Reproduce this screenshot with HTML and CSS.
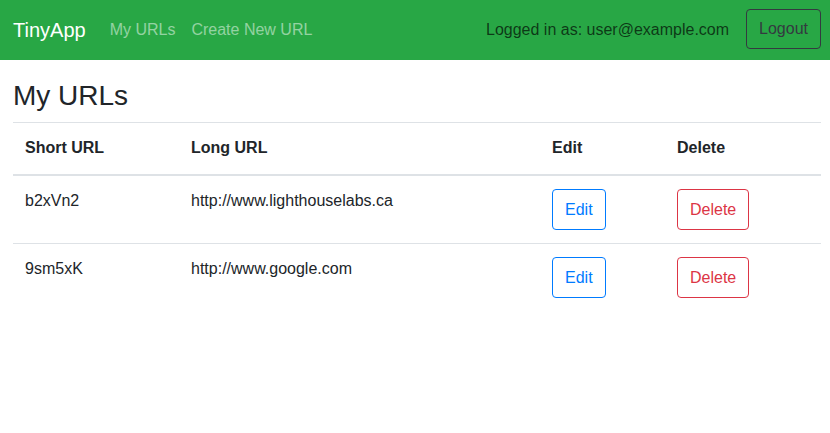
FILE: index.html
```html
<!DOCTYPE html>
<html lang="en">
<head>
<meta charset="utf-8">
<title>TinyApp</title>
<link rel="stylesheet" href="styles.css">
</head>
<body>
<nav class="navbar">
  <a class="brand" href="#">TinyApp</a>
  <div class="nav-links">
    <a class="nav-link" href="#">My URLs</a>
    <a class="nav-link" href="#">Create New URL</a>
  </div>
  <div class="nav-right">
    <span class="nav-text">Logged in as: user@example.com</span>
    <button class="btn btn-dark-outline logout" type="button">Logout</button>
  </div>
</nav>
<main class="main">
  <h3 class="title">My URLs</h3>
  <table class="table">
    <thead>
      <tr>
        <th class="col-short">Short URL</th>
        <th class="col-long">Long URL</th>
        <th class="col-edit">Edit</th>
        <th class="col-delete">Delete</th>
      </tr>
    </thead>
    <tbody>
      <tr>
        <td>b2xVn2</td>
        <td>http://www.lighthouselabs.ca</td>
        <td><button class="btn btn-blue" type="button">Edit</button></td>
        <td><button class="btn btn-red" type="button">Delete</button></td>
      </tr>
      <tr>
        <td>9sm5xK</td>
        <td>http://www.google.com</td>
        <td><button class="btn btn-blue" type="button">Edit</button></td>
        <td><button class="btn btn-red" type="button">Delete</button></td>
      </tr>
    </tbody>
  </table>
</main>
</body>
</html>
```

FILE: styles.css
```css
* { box-sizing: border-box; }

html, body {
  margin: 0;
  padding: 0;
  background: #ffffff;
  color: #212529;
  font-family: "Liberation Sans", Arial, sans-serif;
  font-size: 16px;
  line-height: 1.5;
}

.navbar {
  display: flex;
  align-items: center;
  height: 60px;
  padding: 0 9px 0 13px;
  background: #28a745;
}

.brand {
  font-size: 20px;
  line-height: 30px;
  color: #ffffff;
  text-decoration: none;
  margin-right: 16px;
}

.nav-links {
  display: flex;
}

.nav-link {
  color: rgba(255, 255, 255, 0.5);
  text-decoration: none;
  padding: 0 8px;
  line-height: 24px;
}

.nav-right {
  margin-left: auto;
  display: flex;
  align-items: center;
  gap: 17px;
}

.nav-text {
  color: rgba(0, 0, 0, 0.68);
  line-height: 24px;
}

.btn {
  display: inline-block;
  font-family: inherit;
  font-size: 16px;
  line-height: 24px;
  padding: 8px 12px 7px 12px;
  background: transparent;
  border: 1px solid transparent;
  border-radius: 4px;
  cursor: pointer;
}

.btn-dark-outline {
  color: #343a40;
  border-color: #343a40;
}

.logout {
  padding: 7px 12px;
  margin-bottom: 2px;
}

.btn-blue {
  color: #007bff;
  border-color: #007bff;
}

.btn-red {
  color: #dc3545;
  border-color: #dc3545;
}

.main {
  padding: 19px 9px 0 13px;
}

.title {
  margin: 0 0 9px 0;
  font-size: 28px;
  font-weight: 500;
  line-height: 1.2;
}

.table {
  width: 100%;
  border-collapse: collapse;
}

.table th,
.table td {
  padding: 13.5px 12px;
  text-align: left;
  vertical-align: top;
  border-top: 1px solid #dee2e6;
}

.table tbody td {
  padding: 13px 12px;
}

.table thead th {
  font-weight: 700;
  vertical-align: bottom;
  border-bottom: 2px solid #dee2e6;
}

.col-short { width: 166px; }
.col-long { width: 361px; }
.col-edit { width: 125px; }
.col-delete { width: 156px; }
```
